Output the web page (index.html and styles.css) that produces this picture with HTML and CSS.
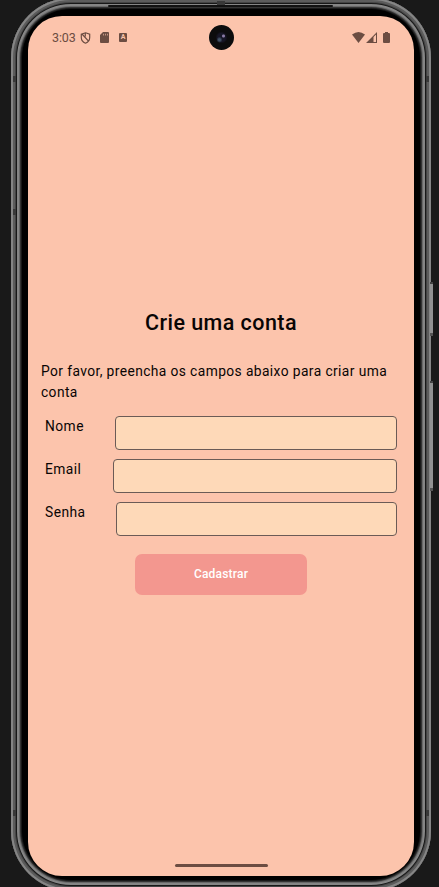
FILE: index.html
```html
<!DOCTYPE html>
<html lang="pt-BR">
<head>
<meta charset="utf-8">
<title>Crie uma conta</title>
<link rel="stylesheet" href="styles.css">
</head>
<body>
<div class="phone">
  <i class="side-key power"></i><i class="side-key volume"></i>
  <i class="seam left upper"></i><i class="seam right upper"></i><i class="seam left mid"></i><i class="seam left lower"></i><i class="seam right lower"></i><i class="seam top"></i><i class="earpiece"></i>
  <div class="screen">
    <i class="camera"></i>
    <header class="status">
      <span class="time">3:03</span>
      <svg class="shield" width="11" height="12" viewBox="0 0 10 12"><path d="M5 .8 9.2 2.2V5.4C9.2 8 7.5 10.1 5 11.2 2.5 10.1.8 8 .8 5.4V2.2Z M1.500 2 8 9.200 M4.800 1v3.500" fill="none" stroke="currentColor" stroke-width="1.2"/></svg>
      <svg class="sd" width="9" height="11" viewBox="0 0 9 11"><path fill-rule="evenodd" d="M3 0H8Q9 0 9 1V10Q9 11 8 11H1Q0 11 0 10V3ZM3.400 1.700V3.500H4V1.700ZM5.200 1.700V3.500H5.800V1.700ZM7 1.700V3.500H7.600V1.700Z" fill="currentColor"/></svg>
      <span class="badge">A</span>
      <span class="spacer"></span>
      <svg class="wifi" width="13" height="11" viewBox="0 0 13 11"><path d="M0 2.5Q6.500-2.500 13 2.500L6.500 11Z" fill="currentColor"/></svg>
      <svg class="signal" width="11" height="11" viewBox="0 0 11 11"><path fill-rule="evenodd" d="M0 11 11 0V11ZM7.500 5V10H10V2.500Z" fill="currentColor"/></svg>
      <svg class="battery" width="7" height="11" viewBox="0 0 7 11"><path d="M2 0H5V1H6Q7 1 7 2V10Q7 11 6 11H1Q0 11 0 10V2Q0 1 1 1H2Z" fill="currentColor"/></svg>
    </header>
    <main class="content">
      <h1>Crie uma conta</h1>
      <p>Por favor, preencha os campos abaixo para criar uma conta</p>
      <form>
        <div class="row name"><label for="nome">Nome</label><input id="nome"></div>
        <div class="row email"><label for="email">Email</label><input id="email"></div>
        <div class="row password"><label for="senha">Senha</label><input id="senha" type="password"></div>
        <button type="button">Cadastrar</button>
      </form>
    </main>
    <div class="home-bar"></div>
  </div>
</div>
</body>
</html>
```
FILE: styles.css
```css
* { box-sizing: border-box; }
body { margin: 0; height: 887px; overflow: hidden; background: #191919; font-family: Roboto, sans-serif; color: #090504; }
.phone {
  position: relative; width: 420px; height: 893px; margin: -2px 0 0 11px; padding: 18px 17px 14px; border-radius: 60px; background: #000;
  box-shadow: inset 0 0 0 2px #858585, inset 0 0 0 4px #5c5c5c, inset 0 0 0 5px #444, inset 0 0 0 6px #181818, inset 0 0 0 8px #858585, inset 0 0 0 9px #686868, inset 0 0 0 10px #333, inset 0 0 0 11px #181818;
}
.screen { position: relative; display: flex; flex-direction: column; width: 386px; height: 860px; border-radius: 34px; background: #fcc4ac; overflow: hidden; }
.side-key { position: absolute; left: 419px; width: 3px; background: #929292; border-top: 2px solid #444; border-bottom: 3px solid #555; }
.power { top: 284px; height: 54px; }
.volume { top: 383px; height: 110px; }
.seam { position: absolute; width: 3px; height: 6px; background: #393939; }
.left { left: 2px; } .right { right: 2px; }
.upper { top: 78px; } .mid { top: 211px; } .lower { top: 812px; }
.top { left: 206px; top: 3px; width: 8px; height: 4px; }
.earpiece { position: absolute; left: 97px; top: 7px; width: 225px; height: 2px; background: #111; border-radius: 2px; }
.camera { position: absolute; left: 181px; top: 9px; width: 25px; height: 25px; border-radius: 50%; background: radial-gradient(circle at 58% 44%, #8a7ba5 0 1px, transparent 2px), radial-gradient(circle at 42% 59%, #435468 0 1px, transparent 3px), radial-gradient(circle, #171627 0 4px, #0c0c0d 6px); }
.status { display: flex; align-items: center; height: 43px; padding: 0 24px; color: #6c4d42; }
.time { width: 28px; font-size: 12.5px; letter-spacing: -.1px; }
.sd { margin-left: 9px; }
.badge { width: 8px; height: 9px; margin-left: 10px; border-radius: 1px; background: #6c4d42; color: #fcc4ac; font: bold 7px/9px Roboto, sans-serif; text-align: center; }
.spacer { flex: 1; }
.signal { margin-left: 1px; }
.battery { margin-left: 6px; }
.content { flex: 1; padding: 250px 17px 0 13px; }
h1 { margin: 0; height: 52px; padding-left: 4px; font-size: 21.5px; font-weight: 550; line-height: 28px; letter-spacing: .45px; text-align: center; }
p { margin: 0 0 13px; font-size: 13.8px; line-height: 21px; letter-spacing: .4px; }
.row { display: flex; height: 34px; margin-bottom: 9px; padding-left: 4px; font-size: 13.8px; line-height: 20px; letter-spacing: .45px; }
.row label { flex: none; width: 70px; }
.email label { width: 68px; }
.password label { width: 71px; }
.row input { flex: 1; min-width: 0; height: 34px; padding: 0 8px; border: 1px solid #6b5b56; border-radius: 4px; background: #fed9b8; }
button { display: block; width: 172px; height: 41px; margin: 18px 0 0 94px; padding: 0 0 2px; border: 0; border-radius: 7px; background: #f3978f; color: #fff; font: 500 12px Roboto, sans-serif; letter-spacing: .2px; }
.home-bar { width: 93px; height: 3px; margin: 0 auto 9px; border-radius: 2px; background: #6c4d42; }
```
